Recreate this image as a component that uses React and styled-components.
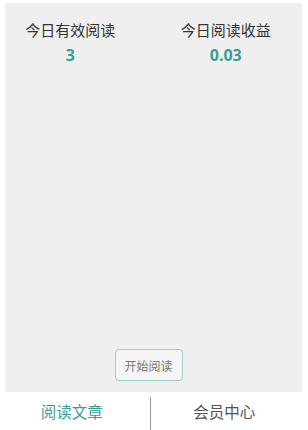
import React from 'react';
import styled, { createGlobalStyle } from 'styled-components';

const GlobalStyle = createGlobalStyle`
	html, body {
		margin: 0;
		padding: 0;
		background: #ffffff;
		font-family: "Noto Sans CJK SC", "Noto Sans", sans-serif;
	}
	#root {
		width: 308px;
		height: 430px;
	}
`;

const Page = styled.div`
	width: 308px;
	height: 430px;
	display: flex;
	flex-direction: column;
	background: #ffffff;
`;

const Main = styled.div`
	flex: 1;
	margin: 3px 6px 0 5px;
	background: #efefef;
	display: flex;
	flex-direction: column;
	align-items: center;
	padding-bottom: 11px;
`;

const Stats = styled.div`
	width: 100%;
	display: grid;
	grid-template-columns: 1fr 1fr;
	padding-top: 16px;
`;

const Stat = styled.div`
	display: flex;
	flex-direction: column;
	align-items: center;
	transform: translateX(${(p) => p.shift}px);
`;

const Label = styled.div`
	font-size: 15px;
	color: #333;
	line-height: 22px;
`;

const Value = styled.div`
	font-family: "Open Sans", "Noto Sans", sans-serif;
	font-weight: 700;
	font-size: 16px;
	color: #3a9e94;
	line-height: 22px;
	margin-top: 3px;
`;

const Spacer = styled.div`
	flex: 1;
`;

const StartButton = styled.button`
	width: 68px;
	height: 32px;
	border: 1px solid #9fcfc8;
	border-radius: 4px;
	background: #f5f5f5;
	color: #777;
	font-family: "Noto Sans CJK SC", sans-serif;
	font-size: 12px;
	padding: 0;
	transform: translateX(-5px);
`;

const TabBar = styled.div`
	height: 38px;
	display: grid;
	grid-template-columns: 1fr 1px 1fr;
	align-items: center;
	padding-right: 8px;
	background: #fff;
`;

const Tab = styled.div`
	text-align: center;
	font-size: 15.5px;
	color: ${(p) => (p.active ? '#3a9e94' : '#555')};
	transform: translateX(${(p) => p.shift}px);
`;

const Divider = styled.div`
	width: 1px;
	align-self: stretch;
	margin-top: 5px;
	background: #999;
`;

export default function App() {
	return (
		<Page>
			<GlobalStyle />
			<Main>
				<Stats>
					<Stat shift={-9}>
						<Label>今日有效阅读</Label>
						<Value>3</Value>
					</Stat>
					<Stat shift={-2}>
						<Label>今日阅读收益</Label>
						<Value>0.03</Value>
					</Stat>
				</Stats>
				<Spacer />
				<StartButton>开始阅读</StartButton>
			</Main>
			<TabBar>
				<Tab active shift={-3}>阅读文章</Tab>
				<Divider />
				<Tab shift={-1}>会员中心</Tab>
			</TabBar>
		</Page>
	);
}
